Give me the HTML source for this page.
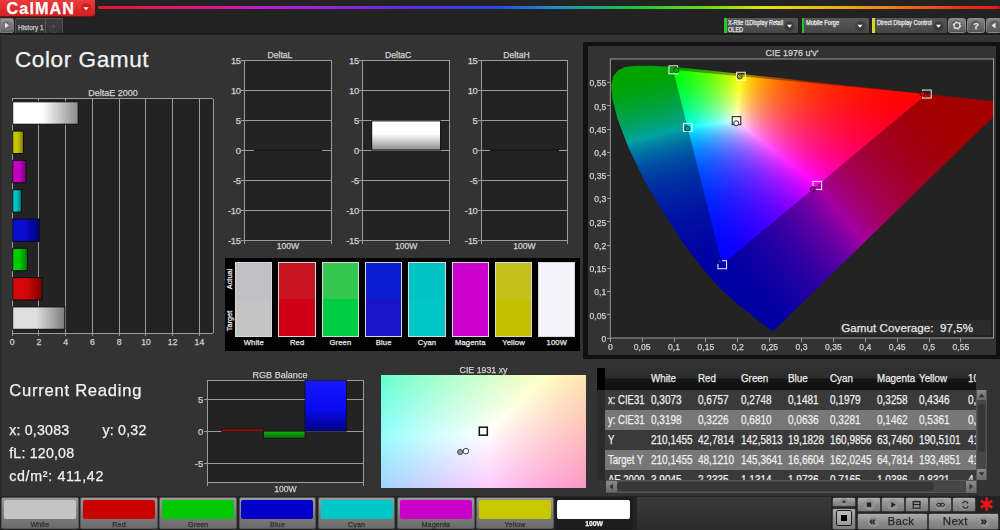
<!DOCTYPE html>
<html><head><meta charset="utf-8">
<style>
*{margin:0;padding:0;box-sizing:border-box}
html,body{width:1000px;height:530px;overflow:hidden;background:#222;font-family:"Liberation Sans", sans-serif;}
.a{position:absolute}
.t{position:absolute;white-space:nowrap;line-height:1;-webkit-text-stroke:0.25px currentColor}
svg{position:absolute;overflow:visible}
line{shape-rendering:crispEdges}
</style></head><body>

<div class="a" style="left:0;top:0;width:1000px;height:17px;background:#222"></div>
<div class="a" style="left:0;top:17px;width:1000px;height:17px;background:#222"></div>
<div class="a" style="left:0;top:0;width:95px;height:16px;background:linear-gradient(#ec3b3b,#d11f22);border-radius:0 0 3px 0;box-shadow:0 1px 0 #7a1010"></div>
<div class="t" style="left:6.6px;top:-0.4px;font-size:16.2px;font-weight:700;color:#fff;letter-spacing:1.05px">CalMAN</div>
<div class="a" style="left:81px;top:3px;width:10px;height:10px;border-radius:50%;background:radial-gradient(circle at 50% 40%,#c81518,#e02a2c)"></div>
<svg style="left:0;top:0" width="100" height="20"><path d="M83.3 7.2 L88.7 7.2 L86 10.2 Z" fill="#fff"/></svg>
<div class="a" style="left:98px;top:5.8px;width:902px;height:3.6px;border-radius:1.8px;background:linear-gradient(90deg,#e0182a 0%,#d8188c 13%,#c419d8 18%,#5a2ee0 35%,#2448e0 44%,#1c8ad0 50%,#20c830 60%,#70dc18 68%,#e6e018 74%,#f0a018 84%,#e83018 96%,#e01818 100%)"></div>
<div class="a" style="left:0;top:18px;width:14px;height:15px;border-radius:0 2px 2px 0;background:linear-gradient(#9a9a9a,#5e5e5e);border:1px solid #777"></div>
<div class="a" style="left:1.5px;top:20.5px;width:10px;height:10px;border-radius:50%;background:radial-gradient(#6a6a6a,#7c7c7c)"></div>
<svg style="left:0;top:0" width="20" height="40"><path d="M5 22.8 L9 25.4 L5 28 Z" fill="#eee"/></svg>
<div class="a" style="left:15px;top:18px;width:48px;height:16px;background:linear-gradient(#3c3c3c,#333);border:1px solid #505050;border-bottom:none;border-radius:2px 2px 0 0"></div>
<div class="a" style="left:45px;top:18px;width:1px;height:16px;background:#555"></div>
<div class="t" style="left:18.2px;top:23.6px;font-size:7.2px;font-weight:400;color:#cccccc;transform:scaleX(0.9);transform-origin:0 0">History 1</div>
<div class="a" style="left:48.5px;top:22px;width:10.5px;height:10.5px;border-radius:50%;background:radial-gradient(#3a3a3a,#353535);border:1px solid #454545"></div>
<div class="t" style="left:51px;top:22.5px;font-size:8px;color:#5a5a5a">+</div>
<div class="a" style="left:724px;top:18px;width:74px;height:16px;background:linear-gradient(#585858,#454545);border-radius:2px"></div>
<div class="a" style="left:724px;top:18px;width:2.5px;height:16px;background:#22cc22"></div>
<div class="t" style="left:728px;top:19.6px;font-size:6.3px;color:#e8e8e8;transform:scaleX(0.88);transform-origin:0 0">X-Rite i1Display Retail</div>
<div class="t" style="left:728px;top:26.6px;font-size:6.3px;color:#e8e8e8;transform:scaleX(0.88);transform-origin:0 0">OLED</div>
<div class="a" style="left:784.0px;top:20.5px;width:11px;height:11px;border-radius:50%;background:radial-gradient(#3a3a3a 40%,#4e4e4e)"></div>
<svg style="left:0;top:0" width="1" height="1"><path d="M786.9 24.8 L792.1 24.8 L789.5 27.8 Z" fill="#fff"/></svg>
<div class="a" style="left:801.5px;top:18px;width:67px;height:16px;background:linear-gradient(#585858,#454545);border-radius:2px"></div>
<div class="a" style="left:801.5px;top:18px;width:2.5px;height:16px;background:#22cc22"></div>
<div class="t" style="left:806.0px;top:19.8px;font-size:6.3px;color:#e8e8e8;transform:scaleX(0.9);transform-origin:0 0">Mobile Forge</div>
<div class="a" style="left:854.5px;top:20.5px;width:11px;height:11px;border-radius:50%;background:radial-gradient(#3a3a3a 40%,#4e4e4e)"></div>
<svg style="left:0;top:0" width="1" height="1"><path d="M857.4 24.8 L862.6 24.8 L860.0 27.8 Z" fill="#fff"/></svg>
<div class="a" style="left:872px;top:18px;width:75px;height:16px;background:linear-gradient(#585858,#454545);border-radius:2px"></div>
<div class="a" style="left:872px;top:18px;width:2.5px;height:16px;background:#d8d820"></div>
<div class="t" style="left:876.5px;top:19.8px;font-size:6.3px;color:#e8e8e8;transform:scaleX(0.9);transform-origin:0 0">Direct Display Control</div>
<div class="a" style="left:933.0px;top:20.5px;width:11px;height:11px;border-radius:50%;background:radial-gradient(#3a3a3a 40%,#4e4e4e)"></div>
<svg style="left:0;top:0" width="1" height="1"><path d="M935.9 24.8 L941.1 24.8 L938.5 27.8 Z" fill="#fff"/></svg>
<div class="a" style="left:948.2px;top:18.2px;width:17.5px;height:14.8px;background:linear-gradient(#858585,#555);border-radius:2.5px;border:1px solid #8a8a8a"></div>
<div class="a" style="left:951.45px;top:20.3px;width:11px;height:11px;border-radius:50%;background:radial-gradient(#5e5e5e 50%,#707070)"></div>
<div class="a" style="left:967.1px;top:18.2px;width:17.5px;height:14.8px;background:linear-gradient(#858585,#555);border-radius:2.5px;border:1px solid #8a8a8a"></div>
<div class="a" style="left:970.35px;top:20.3px;width:11px;height:11px;border-radius:50%;background:radial-gradient(#5e5e5e 50%,#707070)"></div>
<div class="a" style="left:986px;top:18.2px;width:16px;height:14.8px;background:linear-gradient(#858585,#555);border-radius:2.5px;border:1px solid #8a8a8a"></div>
<div class="a" style="left:988.5px;top:20.3px;width:11px;height:11px;border-radius:50%;background:radial-gradient(#5e5e5e 50%,#707070)"></div>
<svg style="left:0;top:0" width="1" height="1"><circle cx="957" cy="25.5" r="2.9" fill="none" stroke="#ddd" stroke-width="1.3"/><circle cx="957" cy="25.5" r="3.6" fill="none" stroke="#ddd" stroke-width="1.4" stroke-dasharray="1.6 2.17"/></svg>
<div class="t" style="left:973.2px;top:21.2px;font-size:9.4px;font-weight:700;color:#e8e8e8">?</div>
<svg style="left:0;top:0" width="1" height="1"><path d="M995.5 22.5 L991.5 25.5 L995.5 28.5 Z" fill="#eee"/></svg>
<div class="a" style="left:0;top:34px;width:1000px;height:462px;background:#333333"></div>
<div class="a" style="left:0;top:32.5px;width:1000px;height:2px;background:#1b1b1b"></div>
<div class="a" style="left:0;top:34.5px;width:1000px;height:1.5px;background:#393939"></div>
<div class="a" style="left:0;top:36px;width:2px;height:460px;background:#2c2c2c"></div>
<div class="t" style="left:15.00px;top:48.87px;font-size:22.6px;font-weight:400;color:#f4f4f4;letter-spacing:0.55px;">Color Gamut</div>
<div class="t" style="left:-87.00px;width:400px;text-align:center;top:88.78px;font-size:9.0px;font-weight:400;color:#d2d2d2;letter-spacing:0px;">DeltaE 2000</div>
<svg style="left:0;top:0" width="1000" height="530"><defs><linearGradient id="bg0" x1="0" x2="1" y1="0" y2="0"><stop offset="0" stop-color="#ffffff"/><stop offset="0.45" stop-color="#ffffff"/><stop offset="1" stop-color="#8a8a8a"/></linearGradient><linearGradient id="bg1" x1="0" x2="1" y1="0" y2="0"><stop offset="0" stop-color="#c8c400"/><stop offset="0.45" stop-color="#c8c400"/><stop offset="1" stop-color="#7e7a00"/></linearGradient><linearGradient id="bg2" x1="0" x2="1" y1="0" y2="0"><stop offset="0" stop-color="#c400c4"/><stop offset="0.45" stop-color="#c400c4"/><stop offset="1" stop-color="#7a007a"/></linearGradient><linearGradient id="bg3" x1="0" x2="1" y1="0" y2="0"><stop offset="0" stop-color="#00c4c4"/><stop offset="0.45" stop-color="#00c4c4"/><stop offset="1" stop-color="#007a7a"/></linearGradient><linearGradient id="bg4" x1="0" x2="1" y1="0" y2="0"><stop offset="0" stop-color="#0c0cd0"/><stop offset="0.45" stop-color="#0c0cd0"/><stop offset="1" stop-color="#000078"/></linearGradient><linearGradient id="bg5" x1="0" x2="1" y1="0" y2="0"><stop offset="0" stop-color="#00cc00"/><stop offset="0.45" stop-color="#00cc00"/><stop offset="1" stop-color="#007800"/></linearGradient><linearGradient id="bg6" x1="0" x2="1" y1="0" y2="0"><stop offset="0" stop-color="#d40808"/><stop offset="0.45" stop-color="#d40808"/><stop offset="1" stop-color="#7e0000"/></linearGradient><linearGradient id="bg7" x1="0" x2="1" y1="0" y2="0"><stop offset="0" stop-color="#dedede"/><stop offset="0.45" stop-color="#dedede"/><stop offset="1" stop-color="#7c7c7c"/></linearGradient></defs><rect x="12.2" y="98.6" width="201.10000000000002" height="234.4" fill="#232323"/><line x1="38.94" y1="98.6" x2="38.94" y2="336.0" stroke="#9c9c9c" stroke-width="1"/><line x1="65.67999999999999" y1="98.6" x2="65.67999999999999" y2="336.0" stroke="#9c9c9c" stroke-width="1"/><line x1="92.42" y1="98.6" x2="92.42" y2="336.0" stroke="#9c9c9c" stroke-width="1"/><line x1="119.16" y1="98.6" x2="119.16" y2="336.0" stroke="#9c9c9c" stroke-width="1"/><line x1="145.89999999999998" y1="98.6" x2="145.89999999999998" y2="336.0" stroke="#9c9c9c" stroke-width="1"/><line x1="172.64" y1="98.6" x2="172.64" y2="336.0" stroke="#9c9c9c" stroke-width="1"/><line x1="199.37999999999997" y1="98.6" x2="199.37999999999997" y2="336.0" stroke="#9c9c9c" stroke-width="1"/><line x1="12.2" y1="98.6" x2="213.3" y2="98.6" stroke="#9c9c9c" stroke-width="1"/><line x1="213.3" y1="98.6" x2="213.3" y2="333.0" stroke="#9c9c9c" stroke-width="1"/><line x1="12.2" y1="98.6" x2="12.2" y2="336.0" stroke="#9c9c9c" stroke-width="1"/><line x1="12.2" y1="333.0" x2="213.3" y2="333.0" stroke="#9c9c9c" stroke-width="1"/><rect x="12.7" y="101.8" width="65.513" height="22.4" fill="url(#bg0)" stroke="#0c0c0c" stroke-width="1"/><rect x="12.7" y="131.1" width="10.696" height="22.4" fill="url(#bg1)" stroke="#0c0c0c" stroke-width="1"/><rect x="12.7" y="160.39999999999998" width="13.37" height="22.4" fill="url(#bg2)" stroke="#0c0c0c" stroke-width="1"/><rect x="12.7" y="189.7" width="8.6905" height="22.4" fill="url(#bg3)" stroke="#0c0c0c" stroke-width="1"/><rect x="12.7" y="219.0" width="26.74" height="22.4" fill="url(#bg4)" stroke="#0c0c0c" stroke-width="1"/><rect x="12.7" y="248.29999999999998" width="14.707" height="22.4" fill="url(#bg5)" stroke="#0c0c0c" stroke-width="1"/><rect x="12.7" y="277.59999999999997" width="29.414" height="22.4" fill="url(#bg6)" stroke="#0c0c0c" stroke-width="1"/><rect x="12.7" y="306.9" width="52.142999999999994" height="22.4" fill="url(#bg7)" stroke="#0c0c0c" stroke-width="1"/></svg>
<div class="t" style="left:-187.80px;width:400px;text-align:center;top:338.22px;font-size:8.6px;font-weight:400;color:#d2d2d2;letter-spacing:0px;">0</div>
<div class="t" style="left:-161.06px;width:400px;text-align:center;top:338.22px;font-size:8.6px;font-weight:400;color:#d2d2d2;letter-spacing:0px;">2</div>
<div class="t" style="left:-134.32px;width:400px;text-align:center;top:338.22px;font-size:8.6px;font-weight:400;color:#d2d2d2;letter-spacing:0px;">4</div>
<div class="t" style="left:-107.58px;width:400px;text-align:center;top:338.22px;font-size:8.6px;font-weight:400;color:#d2d2d2;letter-spacing:0px;">6</div>
<div class="t" style="left:-80.84px;width:400px;text-align:center;top:338.22px;font-size:8.6px;font-weight:400;color:#d2d2d2;letter-spacing:0px;">8</div>
<div class="t" style="left:-54.10px;width:400px;text-align:center;top:338.22px;font-size:8.6px;font-weight:400;color:#d2d2d2;letter-spacing:0px;">10</div>
<div class="t" style="left:-27.36px;width:400px;text-align:center;top:338.22px;font-size:8.6px;font-weight:400;color:#d2d2d2;letter-spacing:0px;">12</div>
<div class="t" style="left:-0.62px;width:400px;text-align:center;top:338.22px;font-size:8.6px;font-weight:400;color:#d2d2d2;letter-spacing:0px;">14</div>
<svg style="left:0;top:0" width="1000" height="530"><rect x="244.5" y="60" width="86.89999999999998" height="180" fill="#232323"/><line x1="241.0" y1="90" x2="331.4" y2="90" stroke="#9c9c9c" stroke-width="1"/><line x1="241.0" y1="120" x2="331.4" y2="120" stroke="#9c9c9c" stroke-width="1"/><line x1="241.0" y1="150" x2="331.4" y2="150" stroke="#9c9c9c" stroke-width="1"/><line x1="241.0" y1="180" x2="331.4" y2="180" stroke="#9c9c9c" stroke-width="1"/><line x1="241.0" y1="210" x2="331.4" y2="210" stroke="#9c9c9c" stroke-width="1"/><line x1="241.0" y1="60" x2="331.4" y2="60" stroke="#9c9c9c" stroke-width="1"/><line x1="241.0" y1="240" x2="331.4" y2="240" stroke="#9c9c9c" stroke-width="1"/><line x1="244.5" y1="60" x2="244.5" y2="243.5" stroke="#9c9c9c" stroke-width="1"/><line x1="331.4" y1="60" x2="331.4" y2="243.5" stroke="#9c9c9c" stroke-width="1"/><line x1="253.5" y1="150" x2="322.4" y2="150" stroke="#1a1a1a" stroke-width="1.2"/></svg>
<div class="t" style="left:-159.30px;width:400px;text-align:right;top:55.64px;font-size:9.4px;font-weight:400;color:#d2d2d2;letter-spacing:-0.3px;">15</div>
<div class="t" style="left:-159.30px;width:400px;text-align:right;top:85.64px;font-size:9.4px;font-weight:400;color:#d2d2d2;letter-spacing:-0.3px;">10</div>
<div class="t" style="left:-159.30px;width:400px;text-align:right;top:115.64px;font-size:9.4px;font-weight:400;color:#d2d2d2;letter-spacing:-0.3px;">5</div>
<div class="t" style="left:-159.30px;width:400px;text-align:right;top:145.64px;font-size:9.4px;font-weight:400;color:#d2d2d2;letter-spacing:-0.3px;">0</div>
<div class="t" style="left:-159.30px;width:400px;text-align:right;top:175.64px;font-size:9.4px;font-weight:400;color:#d2d2d2;letter-spacing:-0.3px;">-5</div>
<div class="t" style="left:-159.30px;width:400px;text-align:right;top:205.64px;font-size:9.4px;font-weight:400;color:#d2d2d2;letter-spacing:-0.3px;">-10</div>
<div class="t" style="left:-159.30px;width:400px;text-align:right;top:235.64px;font-size:9.4px;font-weight:400;color:#d2d2d2;letter-spacing:-0.3px;">-15</div>
<div class="t" style="left:79.95px;width:400px;text-align:center;top:50.52px;font-size:8.6px;font-weight:400;color:#d2d2d2;letter-spacing:0px;">DeltaL</div>
<div class="t" style="left:87.95px;width:400px;text-align:center;top:241.72px;font-size:8.6px;font-weight:400;color:#d2d2d2;letter-spacing:0px;">100W</div>
<svg style="left:0;top:0" width="1000" height="530"><rect x="362.7" y="60" width="86.90000000000003" height="180" fill="#232323"/><line x1="359.2" y1="90" x2="449.6" y2="90" stroke="#9c9c9c" stroke-width="1"/><line x1="359.2" y1="120" x2="449.6" y2="120" stroke="#9c9c9c" stroke-width="1"/><line x1="359.2" y1="150" x2="449.6" y2="150" stroke="#9c9c9c" stroke-width="1"/><line x1="359.2" y1="180" x2="449.6" y2="180" stroke="#9c9c9c" stroke-width="1"/><line x1="359.2" y1="210" x2="449.6" y2="210" stroke="#9c9c9c" stroke-width="1"/><line x1="359.2" y1="60" x2="449.6" y2="60" stroke="#9c9c9c" stroke-width="1"/><line x1="359.2" y1="240" x2="449.6" y2="240" stroke="#9c9c9c" stroke-width="1"/><line x1="362.7" y1="60" x2="362.7" y2="243.5" stroke="#9c9c9c" stroke-width="1"/><line x1="449.6" y1="60" x2="449.6" y2="243.5" stroke="#9c9c9c" stroke-width="1"/><defs><linearGradient id="dc362" x1="0" x2="0" y1="0" y2="1"><stop offset="0" stop-color="#fff"/><stop offset="0.45" stop-color="#fff"/><stop offset="1" stop-color="#8c8c8c"/></linearGradient></defs><rect x="371.7" y="120.9" width="68.90000000000003" height="29.099999999999998" fill="url(#dc362)" stroke="#0c0c0c" stroke-width="1"/></svg>
<div class="t" style="left:-41.10px;width:400px;text-align:right;top:55.64px;font-size:9.4px;font-weight:400;color:#d2d2d2;letter-spacing:-0.3px;">15</div>
<div class="t" style="left:-41.10px;width:400px;text-align:right;top:85.64px;font-size:9.4px;font-weight:400;color:#d2d2d2;letter-spacing:-0.3px;">10</div>
<div class="t" style="left:-41.10px;width:400px;text-align:right;top:115.64px;font-size:9.4px;font-weight:400;color:#d2d2d2;letter-spacing:-0.3px;">5</div>
<div class="t" style="left:-41.10px;width:400px;text-align:right;top:145.64px;font-size:9.4px;font-weight:400;color:#d2d2d2;letter-spacing:-0.3px;">0</div>
<div class="t" style="left:-41.10px;width:400px;text-align:right;top:175.64px;font-size:9.4px;font-weight:400;color:#d2d2d2;letter-spacing:-0.3px;">-5</div>
<div class="t" style="left:-41.10px;width:400px;text-align:right;top:205.64px;font-size:9.4px;font-weight:400;color:#d2d2d2;letter-spacing:-0.3px;">-10</div>
<div class="t" style="left:-41.10px;width:400px;text-align:right;top:235.64px;font-size:9.4px;font-weight:400;color:#d2d2d2;letter-spacing:-0.3px;">-15</div>
<div class="t" style="left:198.15px;width:400px;text-align:center;top:50.52px;font-size:8.6px;font-weight:400;color:#d2d2d2;letter-spacing:0px;">DeltaC</div>
<div class="t" style="left:206.15px;width:400px;text-align:center;top:241.72px;font-size:8.6px;font-weight:400;color:#d2d2d2;letter-spacing:0px;">100W</div>
<svg style="left:0;top:0" width="1000" height="530"><rect x="481.3" y="60" width="86.40000000000003" height="180" fill="#232323"/><line x1="477.8" y1="90" x2="567.7" y2="90" stroke="#9c9c9c" stroke-width="1"/><line x1="477.8" y1="120" x2="567.7" y2="120" stroke="#9c9c9c" stroke-width="1"/><line x1="477.8" y1="150" x2="567.7" y2="150" stroke="#9c9c9c" stroke-width="1"/><line x1="477.8" y1="180" x2="567.7" y2="180" stroke="#9c9c9c" stroke-width="1"/><line x1="477.8" y1="210" x2="567.7" y2="210" stroke="#9c9c9c" stroke-width="1"/><line x1="477.8" y1="60" x2="567.7" y2="60" stroke="#9c9c9c" stroke-width="1"/><line x1="477.8" y1="240" x2="567.7" y2="240" stroke="#9c9c9c" stroke-width="1"/><line x1="481.3" y1="60" x2="481.3" y2="243.5" stroke="#9c9c9c" stroke-width="1"/><line x1="567.7" y1="60" x2="567.7" y2="243.5" stroke="#9c9c9c" stroke-width="1"/><line x1="490.3" y1="150" x2="558.7" y2="150" stroke="#1a1a1a" stroke-width="1.2"/></svg>
<div class="t" style="left:77.50px;width:400px;text-align:right;top:55.64px;font-size:9.4px;font-weight:400;color:#d2d2d2;letter-spacing:-0.3px;">15</div>
<div class="t" style="left:77.50px;width:400px;text-align:right;top:85.64px;font-size:9.4px;font-weight:400;color:#d2d2d2;letter-spacing:-0.3px;">10</div>
<div class="t" style="left:77.50px;width:400px;text-align:right;top:115.64px;font-size:9.4px;font-weight:400;color:#d2d2d2;letter-spacing:-0.3px;">5</div>
<div class="t" style="left:77.50px;width:400px;text-align:right;top:145.64px;font-size:9.4px;font-weight:400;color:#d2d2d2;letter-spacing:-0.3px;">0</div>
<div class="t" style="left:77.50px;width:400px;text-align:right;top:175.64px;font-size:9.4px;font-weight:400;color:#d2d2d2;letter-spacing:-0.3px;">-5</div>
<div class="t" style="left:77.50px;width:400px;text-align:right;top:205.64px;font-size:9.4px;font-weight:400;color:#d2d2d2;letter-spacing:-0.3px;">-10</div>
<div class="t" style="left:77.50px;width:400px;text-align:right;top:235.64px;font-size:9.4px;font-weight:400;color:#d2d2d2;letter-spacing:-0.3px;">-15</div>
<div class="t" style="left:316.50px;width:400px;text-align:center;top:50.52px;font-size:8.6px;font-weight:400;color:#d2d2d2;letter-spacing:0px;">DeltaH</div>
<div class="t" style="left:324.50px;width:400px;text-align:center;top:241.72px;font-size:8.6px;font-weight:400;color:#d2d2d2;letter-spacing:0px;">100W</div>
<div class="a" style="left:225px;top:258px;width:355px;height:92.5px;background:#000"></div>
<div class="a" style="left:235.20px;top:262px;width:37.3px;height:75.3px;border:1px solid #d8d8d8;background:linear-gradient(#c0c0c4 0,#c0c0c4 50%,#c4c4c4 50%,#c4c4c4 100%)"></div>
<div class="t" style="left:53.85px;width:400px;text-align:center;top:339.17px;font-size:7.6px;font-weight:400;color:#eaeaea;letter-spacing:0.15px;">White</div>
<div class="a" style="left:278.48px;top:262px;width:37.3px;height:75.3px;border:1px solid #d8d8d8;background:linear-gradient(#c8141e 0,#c8141e 50%,#d0001a 50%,#d0001a 100%)"></div>
<div class="t" style="left:97.13px;width:400px;text-align:center;top:339.17px;font-size:7.6px;font-weight:400;color:#eaeaea;letter-spacing:0.15px;">Red</div>
<div class="a" style="left:321.76px;top:262px;width:37.3px;height:75.3px;border:1px solid #d8d8d8;background:linear-gradient(#34c850 0,#34c850 50%,#00cc44 50%,#00cc44 100%)"></div>
<div class="t" style="left:140.41px;width:400px;text-align:center;top:339.17px;font-size:7.6px;font-weight:400;color:#eaeaea;letter-spacing:0.15px;">Green</div>
<div class="a" style="left:365.04px;top:262px;width:37.3px;height:75.3px;border:1px solid #d8d8d8;background:linear-gradient(#0a1ed0 0,#0a1ed0 50%,#1a14c8 50%,#1a14c8 100%)"></div>
<div class="t" style="left:183.69px;width:400px;text-align:center;top:339.17px;font-size:7.6px;font-weight:400;color:#eaeaea;letter-spacing:0.15px;">Blue</div>
<div class="a" style="left:408.32px;top:262px;width:37.3px;height:75.3px;border:1px solid #d8d8d8;background:linear-gradient(#00c4c4 0,#00c4c4 50%,#00c6c6 50%,#00c6c6 100%)"></div>
<div class="t" style="left:226.97px;width:400px;text-align:center;top:339.17px;font-size:7.6px;font-weight:400;color:#eaeaea;letter-spacing:0.15px;">Cyan</div>
<div class="a" style="left:451.60px;top:262px;width:37.3px;height:75.3px;border:1px solid #d8d8d8;background:linear-gradient(#cc00cc 0,#cc00cc 50%,#cc00cc 50%,#cc00cc 100%)"></div>
<div class="t" style="left:270.25px;width:400px;text-align:center;top:339.17px;font-size:7.6px;font-weight:400;color:#eaeaea;letter-spacing:0.15px;">Magenta</div>
<div class="a" style="left:494.88px;top:262px;width:37.3px;height:75.3px;border:1px solid #d8d8d8;background:linear-gradient(#c4c01c 0,#c4c01c 50%,#c4c000 50%,#c4c000 100%)"></div>
<div class="t" style="left:313.53px;width:400px;text-align:center;top:339.17px;font-size:7.6px;font-weight:400;color:#eaeaea;letter-spacing:0.15px;">Yellow</div>
<div class="a" style="left:538.16px;top:262px;width:37.3px;height:75.3px;border:1px solid #d8d8d8;background:linear-gradient(#f4f4fa 0,#f4f4fa 50%,#f4f4fa 50%,#f4f4fa 100%)"></div>
<div class="t" style="left:356.81px;width:400px;text-align:center;top:339.17px;font-size:7.6px;font-weight:400;color:#eaeaea;letter-spacing:0.15px;">100W</div>
<div class="t" style="left:230px;top:279px;font-size:7.4px;font-weight:400;color:#e8e8e8;transform:translate(-50%,-50%) rotate(-90deg)">Actual</div>
<div class="t" style="left:230px;top:321px;font-size:7.4px;font-weight:400;color:#e8e8e8;transform:translate(-50%,-50%) rotate(-90deg)">Target</div>
<div class="a" style="left:583px;top:42px;width:417px;height:316.7px;background:#111"></div>
<div class="a" style="left:587.5px;top:46px;width:408px;height:308.7px;background:#333"></div>
<div class="t" style="left:592.00px;width:400px;text-align:center;top:48.98px;font-size:9.0px;font-weight:400;color:#d2d2d2;letter-spacing:0px;">CIE 1976 u'v'</div>
<div class="a" style="left:610.3px;top:59px;width:383.2px;height:279px;background:#232323"></div>
<svg id="ciefb" style="left:610px;top:59px" width="384" height="279"><defs><linearGradient id="fbo" gradientUnits="userSpaceOnUse" x1="0" y1="0" x2="0" y2="279"><stop offset="0" stop-color="#009a00"/><stop offset="0.35" stop-color="#008a40"/><stop offset="0.5" stop-color="#008080"/><stop offset="0.75" stop-color="#0020a0"/><stop offset="1" stop-color="#0000a0"/></linearGradient><linearGradient id="fbr" gradientUnits="userSpaceOnUse" x1="330" y1="60" x2="230" y2="180"><stop offset="0" stop-color="#a00000"/><stop offset="0.5" stop-color="#900090"/><stop offset="1" stop-color="#1a00a0"/></linearGradient><radialGradient id="fbw" gradientUnits="userSpaceOnUse" cx="126.4" cy="61.6" r="60"><stop offset="0" stop-color="#fff"/><stop offset="0.3" stop-color="#fff" stop-opacity="0.7"/><stop offset="1" stop-color="#fff" stop-opacity="0"/></radialGradient><linearGradient id="fbt" gradientUnits="userSpaceOnUse" x1="70" y1="15" x2="320" y2="40"><stop offset="0" stop-color="#00ff20"/><stop offset="0.25" stop-color="#e0ff00"/><stop offset="0.5" stop-color="#ff8000"/><stop offset="1" stop-color="#ff0010"/></linearGradient><linearGradient id="fbb" gradientUnits="userSpaceOnUse" x1="100" y1="60" x2="150" y2="250"><stop offset="0" stop-color="#00ffff" stop-opacity="0"/><stop offset="0.3" stop-color="#00e0ff"/><stop offset="0.7" stop-color="#2040ff"/><stop offset="1" stop-color="#0000ff"/></linearGradient></defs><polygon points="164.0,271.3 163.8,271.4 163.3,271.6 162.6,271.6 161.1,271.2 159.5,270.1 157.2,268.5 154.0,266.0 149.9,262.7 144.8,258.7 138.1,253.5 129.9,247.1 120.0,238.6 108.0,227.0 92.2,208.9 73.4,184.1 53.1,153.3 33.5,119.9 18.3,87.9 7.9,60.9 2.5,40.8 1.2,26.9 3.3,17.3 8.1,11.2 15.0,8.1 23.3,6.9 32.2,6.6 41.3,6.7 50.8,7.2 61.0,7.9 72.2,8.8 84.4,10.0 97.9,11.3 112.9,12.9 129.5,14.7 147.7,16.7 167.6,18.8 189.0,21.2 211.7,23.6 235.0,26.2 257.6,28.6 279.5,31.0 299.4,33.2 317.0,35.1 332.0,36.7 344.6,38.1 355.1,39.2 364.3,40.2 372.0,41.1 383.2,42.3 389.8,43.0 397.8,43.9" fill="url(#fbo)"/><polygon points="112.1,205.7 316.8,35.1 167.6,18.8 189.0,21.2 211.7,23.6 235.0,26.2 257.6,28.6 279.5,31.0 299.4,33.2 317.0,35.1 332.0,36.7 344.6,38.1 355.1,39.2 364.3,40.2 372.0,41.1 383.2,42.3 389.8,43.0 397.8,43.9 164.0,271.3 163.8,271.4 163.3,271.6 162.6,271.6 161.1,271.2 159.5,270.1 157.2,268.5 154.0,266.0 149.9,262.7 144.8,258.7 138.1,253.5 129.9,247.1 120.0,238.6" fill="url(#fbr)"/><polygon points="316.8,35.1 63.2,10.8 112.1,205.7" fill="url(#fbt)"/><polygon points="316.8,35.1 63.2,10.8 112.1,205.7" fill="url(#fbb)" opacity="0.9"/><polygon points="316.8,35.1 63.2,10.8 112.1,205.7" fill="url(#fbw)"/></svg>
<canvas id="cie" class="a" width="384" height="279" style="left:610px;top:59px;width:384px;height:279px"></canvas>
<svg style="left:0;top:0" width="1000" height="530"><rect x="610.3" y="59" width="383.2" height="279" fill="none" stroke="#9a9a9a" stroke-width="1"/><line x1="606.5" y1="338.00" x2="610.3" y2="338.00" stroke="#9a9a9a" stroke-width="1"/><line x1="610.30" y1="338" x2="610.30" y2="341.5" stroke="#9a9a9a" stroke-width="1"/><line x1="606.5" y1="314.79" x2="610.3" y2="314.79" stroke="#9a9a9a" stroke-width="1"/><line x1="642.18" y1="338" x2="642.18" y2="341.5" stroke="#9a9a9a" stroke-width="1"/><line x1="606.5" y1="291.58" x2="610.3" y2="291.58" stroke="#9a9a9a" stroke-width="1"/><line x1="674.06" y1="338" x2="674.06" y2="341.5" stroke="#9a9a9a" stroke-width="1"/><line x1="606.5" y1="268.37" x2="610.3" y2="268.37" stroke="#9a9a9a" stroke-width="1"/><line x1="705.94" y1="338" x2="705.94" y2="341.5" stroke="#9a9a9a" stroke-width="1"/><line x1="606.5" y1="245.16" x2="610.3" y2="245.16" stroke="#9a9a9a" stroke-width="1"/><line x1="737.82" y1="338" x2="737.82" y2="341.5" stroke="#9a9a9a" stroke-width="1"/><line x1="606.5" y1="221.95" x2="610.3" y2="221.95" stroke="#9a9a9a" stroke-width="1"/><line x1="769.70" y1="338" x2="769.70" y2="341.5" stroke="#9a9a9a" stroke-width="1"/><line x1="606.5" y1="198.74" x2="610.3" y2="198.74" stroke="#9a9a9a" stroke-width="1"/><line x1="801.58" y1="338" x2="801.58" y2="341.5" stroke="#9a9a9a" stroke-width="1"/><line x1="606.5" y1="175.53" x2="610.3" y2="175.53" stroke="#9a9a9a" stroke-width="1"/><line x1="833.46" y1="338" x2="833.46" y2="341.5" stroke="#9a9a9a" stroke-width="1"/><line x1="606.5" y1="152.32" x2="610.3" y2="152.32" stroke="#9a9a9a" stroke-width="1"/><line x1="865.34" y1="338" x2="865.34" y2="341.5" stroke="#9a9a9a" stroke-width="1"/><line x1="606.5" y1="129.11" x2="610.3" y2="129.11" stroke="#9a9a9a" stroke-width="1"/><line x1="897.22" y1="338" x2="897.22" y2="341.5" stroke="#9a9a9a" stroke-width="1"/><line x1="606.5" y1="105.90" x2="610.3" y2="105.90" stroke="#9a9a9a" stroke-width="1"/><line x1="929.10" y1="338" x2="929.10" y2="341.5" stroke="#9a9a9a" stroke-width="1"/><line x1="606.5" y1="82.69" x2="610.3" y2="82.69" stroke="#9a9a9a" stroke-width="1"/><line x1="960.98" y1="338" x2="960.98" y2="341.5" stroke="#9a9a9a" stroke-width="1"/></svg>
<div class="t" style="left:206.30px;width:400px;text-align:right;top:334.72px;font-size:8.6px;font-weight:400;color:#d2d2d2;letter-spacing:0px;">0</div>
<div class="t" style="left:410.30px;width:400px;text-align:center;top:343.22px;font-size:8.6px;font-weight:400;color:#d2d2d2;letter-spacing:0px;">0</div>
<div class="t" style="left:206.30px;width:400px;text-align:right;top:311.51px;font-size:8.6px;font-weight:400;color:#d2d2d2;letter-spacing:0px;">0,05</div>
<div class="t" style="left:442.18px;width:400px;text-align:center;top:343.22px;font-size:8.6px;font-weight:400;color:#d2d2d2;letter-spacing:0px;">0,05</div>
<div class="t" style="left:206.30px;width:400px;text-align:right;top:288.30px;font-size:8.6px;font-weight:400;color:#d2d2d2;letter-spacing:0px;">0,1</div>
<div class="t" style="left:474.06px;width:400px;text-align:center;top:343.22px;font-size:8.6px;font-weight:400;color:#d2d2d2;letter-spacing:0px;">0,1</div>
<div class="t" style="left:206.30px;width:400px;text-align:right;top:265.09px;font-size:8.6px;font-weight:400;color:#d2d2d2;letter-spacing:0px;">0,15</div>
<div class="t" style="left:505.94px;width:400px;text-align:center;top:343.22px;font-size:8.6px;font-weight:400;color:#d2d2d2;letter-spacing:0px;">0,15</div>
<div class="t" style="left:206.30px;width:400px;text-align:right;top:241.88px;font-size:8.6px;font-weight:400;color:#d2d2d2;letter-spacing:0px;">0,2</div>
<div class="t" style="left:537.82px;width:400px;text-align:center;top:343.22px;font-size:8.6px;font-weight:400;color:#d2d2d2;letter-spacing:0px;">0,2</div>
<div class="t" style="left:206.30px;width:400px;text-align:right;top:218.67px;font-size:8.6px;font-weight:400;color:#d2d2d2;letter-spacing:0px;">0,25</div>
<div class="t" style="left:569.70px;width:400px;text-align:center;top:343.22px;font-size:8.6px;font-weight:400;color:#d2d2d2;letter-spacing:0px;">0,25</div>
<div class="t" style="left:206.30px;width:400px;text-align:right;top:195.46px;font-size:8.6px;font-weight:400;color:#d2d2d2;letter-spacing:0px;">0,3</div>
<div class="t" style="left:601.58px;width:400px;text-align:center;top:343.22px;font-size:8.6px;font-weight:400;color:#d2d2d2;letter-spacing:0px;">0,3</div>
<div class="t" style="left:206.30px;width:400px;text-align:right;top:172.25px;font-size:8.6px;font-weight:400;color:#d2d2d2;letter-spacing:0px;">0,35</div>
<div class="t" style="left:633.46px;width:400px;text-align:center;top:343.22px;font-size:8.6px;font-weight:400;color:#d2d2d2;letter-spacing:0px;">0,35</div>
<div class="t" style="left:206.30px;width:400px;text-align:right;top:149.04px;font-size:8.6px;font-weight:400;color:#d2d2d2;letter-spacing:0px;">0,4</div>
<div class="t" style="left:665.34px;width:400px;text-align:center;top:343.22px;font-size:8.6px;font-weight:400;color:#d2d2d2;letter-spacing:0px;">0,4</div>
<div class="t" style="left:206.30px;width:400px;text-align:right;top:125.83px;font-size:8.6px;font-weight:400;color:#d2d2d2;letter-spacing:0px;">0,45</div>
<div class="t" style="left:697.22px;width:400px;text-align:center;top:343.22px;font-size:8.6px;font-weight:400;color:#d2d2d2;letter-spacing:0px;">0,45</div>
<div class="t" style="left:206.30px;width:400px;text-align:right;top:102.62px;font-size:8.6px;font-weight:400;color:#d2d2d2;letter-spacing:0px;">0,5</div>
<div class="t" style="left:729.10px;width:400px;text-align:center;top:343.22px;font-size:8.6px;font-weight:400;color:#d2d2d2;letter-spacing:0px;">0,5</div>
<div class="t" style="left:206.30px;width:400px;text-align:right;top:79.41px;font-size:8.6px;font-weight:400;color:#d2d2d2;letter-spacing:0px;">0,55</div>
<div class="t" style="left:760.98px;width:400px;text-align:center;top:343.22px;font-size:8.6px;font-weight:400;color:#d2d2d2;letter-spacing:0px;">0,55</div>
<div class="a" style="left:840.4px;top:320.1px;width:151px;height:15.2px;background:#2b2b2b"></div>
<div class="t" style="left:841.30px;top:322.08px;font-size:11.6px;font-weight:400;color:#e6e6e6;letter-spacing:0.05px;">Gamut Coverage:&nbsp; 97,5%</div>
<svg style="left:0;top:0" width="1000" height="530"><rect x="922.60" y="90.06" width="8.6" height="8" fill="none" stroke="#fff" stroke-opacity="0.9" stroke-width="1.05"/><rect x="668.97" y="65.83" width="8.6" height="8" fill="none" stroke="#fff" stroke-opacity="0.9" stroke-width="1.05"/><rect x="717.94" y="260.70" width="8.6" height="8" fill="none" stroke="#fff" stroke-opacity="0.9" stroke-width="1.05"/><rect x="683.44" y="123.39" width="8.6" height="8" fill="none" stroke="#fff" stroke-opacity="0.9" stroke-width="1.05"/><rect x="813.00" y="181.42" width="8.6" height="8" fill="none" stroke="#fff" stroke-opacity="0.9" stroke-width="1.05"/><rect x="736.62" y="72.28" width="8.6" height="8" fill="none" stroke="#fff" stroke-opacity="0.9" stroke-width="1.05"/><rect x="732.22" y="116.62" width="8.6" height="8" fill="none" stroke="#0a0a0a" stroke-opacity="0.9" stroke-width="1.05"/><circle cx="922.53" cy="93.83" r="2.5" fill="#d00000" stroke="#500000" stroke-width="1"/><circle cx="676.29" cy="70.16" r="2.5" fill="#00b000" stroke="#004000" stroke-width="1"/><circle cx="719.27" cy="261.36" r="2.5" fill="#1010d0" stroke="#000050" stroke-width="1"/><circle cx="687.45" cy="128.46" r="2.5" fill="#00a0a0" stroke="#003838" stroke-width="1"/><circle cx="812.80" cy="189.13" r="2.5" fill="#a000a0" stroke="#3a003a" stroke-width="1"/><circle cx="739.73" cy="76.47" r="2.5" fill="#a0a000" stroke="#383800" stroke-width="1"/><circle cx="736.23" cy="123.31" r="2.5" fill="#ffffff" stroke="#222" stroke-width="1"/></svg>
<div class="t" style="left:9.20px;top:382.85px;font-size:16.6px;font-weight:400;color:#f2f2f2;letter-spacing:0.75px;">Current Reading</div>
<div class="t" style="left:9.20px;top:423.28px;font-size:14.2px;font-weight:400;color:#f0f0f0;letter-spacing:0.2px;">x: 0,3083</div>
<div class="t" style="left:102.50px;top:423.28px;font-size:14.2px;font-weight:400;color:#f0f0f0;letter-spacing:0.2px;">y: 0,32</div>
<div class="t" style="left:9.20px;top:445.78px;font-size:14.2px;font-weight:400;color:#f0f0f0;letter-spacing:0.2px;">fL: 120,08</div>
<div class="t" style="left:9.20px;top:468.98px;font-size:14.2px;font-weight:400;color:#f0f0f0;letter-spacing:0.7px;">cd/m&sup2;: 411,42</div>
<div class="t" style="left:80.00px;width:400px;text-align:center;top:370.70px;font-size:9.1px;font-weight:400;color:#d2d2d2;letter-spacing:0px;">RGB Balance</div>
<svg style="left:0;top:0" width="1000" height="530"><rect x="207.2" y="380.3" width="156.40000000000003" height="101.80000000000001" fill="#232323"/><line x1="203.7" y1="399.39" x2="363.6" y2="399.39" stroke="#9c9c9c" stroke-width="1"/><line x1="203.7" y1="431.20" x2="363.6" y2="431.20" stroke="#9c9c9c" stroke-width="1"/><line x1="203.7" y1="463.01" x2="363.6" y2="463.01" stroke="#9c9c9c" stroke-width="1"/><line x1="207.2" y1="380.3" x2="363.6" y2="380.3" stroke="#9c9c9c" stroke-width="1"/><line x1="207.2" y1="482.1" x2="363.6" y2="482.1" stroke="#9c9c9c" stroke-width="1"/><line x1="207.2" y1="380.3" x2="207.2" y2="485.6" stroke="#9c9c9c" stroke-width="1"/><line x1="363.6" y1="380.3" x2="363.6" y2="485.6" stroke="#9c9c9c" stroke-width="1"/><defs><linearGradient id="gb" x1="0" x2="0" y1="0" y2="1"><stop offset="0" stop-color="#1818ff"/><stop offset="0.55" stop-color="#0a0af0"/><stop offset="1" stop-color="#00008a"/></linearGradient><linearGradient id="gg" x1="0" x2="0" y1="0" y2="1"><stop offset="0" stop-color="#10b010"/><stop offset="1" stop-color="#007000"/></linearGradient><linearGradient id="gr" x1="0" x2="0" y1="0" y2="1"><stop offset="0" stop-color="#d01010"/><stop offset="1" stop-color="#800000"/></linearGradient></defs><rect x="221.7" y="429.0" width="41.8" height="2.4" fill="url(#gr)" stroke="#111" stroke-width="0.8"/><rect x="263.5" y="431.2" width="41.5" height="7.0" fill="url(#gg)" stroke="#111" stroke-width="0.8"/><rect x="305" y="380.3" width="41.4" height="50.90" fill="url(#gb)" stroke="#111" stroke-width="0.8"/></svg>
<div class="t" style="left:-196.80px;width:400px;text-align:right;top:395.03px;font-size:9.4px;font-weight:400;color:#d2d2d2;letter-spacing:0px;">5</div>
<div class="t" style="left:-196.80px;width:400px;text-align:right;top:426.84px;font-size:9.4px;font-weight:400;color:#d2d2d2;letter-spacing:0px;">0</div>
<div class="t" style="left:-196.80px;width:400px;text-align:right;top:458.66px;font-size:9.4px;font-weight:400;color:#d2d2d2;letter-spacing:0px;">-5</div>
<div class="t" style="left:85.40px;width:400px;text-align:center;top:484.72px;font-size:8.6px;font-weight:400;color:#d2d2d2;letter-spacing:0px;">100W</div>
<div class="t" style="left:283.50px;width:400px;text-align:center;top:365.85px;font-size:8.8px;font-weight:400;color:#d2d2d2;letter-spacing:0px;">CIE 1931 xy</div>
<div class="a" style="left:381px;top:375px;width:205px;height:113px;background:linear-gradient(rgba(150,255,170,0.55),rgba(255,255,255,0) 45%,rgba(255,160,240,0) 55%,rgba(255,150,230,0.55)),linear-gradient(90deg,#a0f8f0,#fff 50%,#ffb0c0)"></div>
<canvas id="xy" class="a" width="205" height="113" style="left:381px;top:375px;width:205px;height:113px"></canvas>
<svg style="left:0;top:0" width="1000" height="530"><rect x="479.3" y="427.2" width="8" height="8" fill="none" stroke="#111" stroke-width="1.5"/><circle cx="460.2" cy="452" r="2.6" fill="#9a9a9a" stroke="#333" stroke-width="0.9"/><circle cx="465.9" cy="451.1" r="2.8" fill="#fff" stroke="#333" stroke-width="0.9"/></svg>
<div class="a" style="left:597px;top:367.5px;width:379px;height:112.5px;overflow:hidden">
<div class="a" style="left:0;top:0;width:379px;height:22.2px;background:linear-gradient(#303030 0,#2c2c2c 45%,#151515 50%,#111 100%)"></div>
<div class="a" style="left:0;top:0;width:8px;height:22.2px;background:#000"></div>
<div class="t" style="left:54.30px;top:5.45px;font-size:11.4px;font-weight:400;color:#f0f0f0;letter-spacing:0px;transform:scaleX(0.86);transform-origin:0 0;">White</div>
<div class="t" style="left:101.30px;top:5.45px;font-size:11.4px;font-weight:400;color:#f0f0f0;letter-spacing:0px;transform:scaleX(0.86);transform-origin:0 0;">Red</div>
<div class="t" style="left:143.60px;top:5.45px;font-size:11.4px;font-weight:400;color:#f0f0f0;letter-spacing:0px;transform:scaleX(0.86);transform-origin:0 0;">Green</div>
<div class="t" style="left:191.10px;top:5.45px;font-size:11.4px;font-weight:400;color:#f0f0f0;letter-spacing:0px;transform:scaleX(0.86);transform-origin:0 0;">Blue</div>
<div class="t" style="left:232.60px;top:5.45px;font-size:11.4px;font-weight:400;color:#f0f0f0;letter-spacing:0px;transform:scaleX(0.86);transform-origin:0 0;">Cyan</div>
<div class="t" style="left:280.20px;top:5.45px;font-size:11.4px;font-weight:400;color:#f0f0f0;letter-spacing:0px;transform:scaleX(0.86);transform-origin:0 0;">Magenta</div>
<div class="t" style="left:322.40px;top:5.45px;font-size:11.4px;font-weight:400;color:#f0f0f0;letter-spacing:0px;transform:scaleX(0.86);transform-origin:0 0;">Yellow</div>
<div class="t" style="left:370.50px;top:5.45px;font-size:11.4px;font-weight:400;color:#f0f0f0;letter-spacing:0px;transform:scaleX(0.86);transform-origin:0 0;">100W</div>
<div class="a" style="left:0;top:22.20px;width:379px;height:20.05px;background:#3a3a3a"></div>
<div class="a" style="left:0;top:22.20px;width:8px;height:20.05px;background:#2a2a2a"></div>
<div class="t" style="left:10.50px;top:26.47px;font-size:12.2px;font-weight:400;color:#f0f0f0;letter-spacing:0px;transform:scaleX(0.78);transform-origin:0 0;">x: CIE31</div>
<div class="t" style="left:54.30px;top:26.47px;font-size:12.2px;font-weight:400;color:#f0f0f0;letter-spacing:0px;transform:scaleX(0.82);transform-origin:0 0;">0,3073</div>
<div class="t" style="left:101.30px;top:26.47px;font-size:12.2px;font-weight:400;color:#f0f0f0;letter-spacing:0px;transform:scaleX(0.82);transform-origin:0 0;">0,6757</div>
<div class="t" style="left:143.60px;top:26.47px;font-size:12.2px;font-weight:400;color:#f0f0f0;letter-spacing:0px;transform:scaleX(0.82);transform-origin:0 0;">0,2748</div>
<div class="t" style="left:191.10px;top:26.47px;font-size:12.2px;font-weight:400;color:#f0f0f0;letter-spacing:0px;transform:scaleX(0.82);transform-origin:0 0;">0,1481</div>
<div class="t" style="left:232.60px;top:26.47px;font-size:12.2px;font-weight:400;color:#f0f0f0;letter-spacing:0px;transform:scaleX(0.82);transform-origin:0 0;">0,1979</div>
<div class="t" style="left:280.20px;top:26.47px;font-size:12.2px;font-weight:400;color:#f0f0f0;letter-spacing:0px;transform:scaleX(0.82);transform-origin:0 0;">0,3258</div>
<div class="t" style="left:322.40px;top:26.47px;font-size:12.2px;font-weight:400;color:#f0f0f0;letter-spacing:0px;transform:scaleX(0.82);transform-origin:0 0;">0,4346</div>
<div class="t" style="left:370.50px;top:26.47px;font-size:12.2px;font-weight:400;color:#f0f0f0;letter-spacing:0px;transform:scaleX(0.82);transform-origin:0 0;">0,3083</div>
<div class="a" style="left:0;top:42.25px;width:379px;height:20.05px;background:#777777"></div>
<div class="a" style="left:0;top:42.25px;width:8px;height:20.05px;background:#2a2a2a"></div>
<div class="t" style="left:10.50px;top:46.52px;font-size:12.2px;font-weight:400;color:#f0f0f0;letter-spacing:0px;transform:scaleX(0.78);transform-origin:0 0;">y: CIE31</div>
<div class="t" style="left:54.30px;top:46.52px;font-size:12.2px;font-weight:400;color:#f0f0f0;letter-spacing:0px;transform:scaleX(0.82);transform-origin:0 0;">0,3198</div>
<div class="t" style="left:101.30px;top:46.52px;font-size:12.2px;font-weight:400;color:#f0f0f0;letter-spacing:0px;transform:scaleX(0.82);transform-origin:0 0;">0,3226</div>
<div class="t" style="left:143.60px;top:46.52px;font-size:12.2px;font-weight:400;color:#f0f0f0;letter-spacing:0px;transform:scaleX(0.82);transform-origin:0 0;">0,6810</div>
<div class="t" style="left:191.10px;top:46.52px;font-size:12.2px;font-weight:400;color:#f0f0f0;letter-spacing:0px;transform:scaleX(0.82);transform-origin:0 0;">0,0636</div>
<div class="t" style="left:232.60px;top:46.52px;font-size:12.2px;font-weight:400;color:#f0f0f0;letter-spacing:0px;transform:scaleX(0.82);transform-origin:0 0;">0,3281</div>
<div class="t" style="left:280.20px;top:46.52px;font-size:12.2px;font-weight:400;color:#f0f0f0;letter-spacing:0px;transform:scaleX(0.82);transform-origin:0 0;">0,1462</div>
<div class="t" style="left:322.40px;top:46.52px;font-size:12.2px;font-weight:400;color:#f0f0f0;letter-spacing:0px;transform:scaleX(0.82);transform-origin:0 0;">0,5361</div>
<div class="t" style="left:370.50px;top:46.52px;font-size:12.2px;font-weight:400;color:#f0f0f0;letter-spacing:0px;transform:scaleX(0.82);transform-origin:0 0;">0,3200</div>
<div class="a" style="left:0;top:62.30px;width:379px;height:20.05px;background:#3a3a3a"></div>
<div class="a" style="left:0;top:62.30px;width:8px;height:20.05px;background:#2a2a2a"></div>
<div class="t" style="left:10.50px;top:66.57px;font-size:12.2px;font-weight:400;color:#f0f0f0;letter-spacing:0px;transform:scaleX(0.78);transform-origin:0 0;">Y</div>
<div class="t" style="left:54.30px;top:66.57px;font-size:12.2px;font-weight:400;color:#f0f0f0;letter-spacing:0px;transform:scaleX(0.82);transform-origin:0 0;">210,1455</div>
<div class="t" style="left:101.30px;top:66.57px;font-size:12.2px;font-weight:400;color:#f0f0f0;letter-spacing:0px;transform:scaleX(0.82);transform-origin:0 0;">42,7814</div>
<div class="t" style="left:143.60px;top:66.57px;font-size:12.2px;font-weight:400;color:#f0f0f0;letter-spacing:0px;transform:scaleX(0.82);transform-origin:0 0;">142,5813</div>
<div class="t" style="left:191.10px;top:66.57px;font-size:12.2px;font-weight:400;color:#f0f0f0;letter-spacing:0px;transform:scaleX(0.82);transform-origin:0 0;">19,1828</div>
<div class="t" style="left:232.60px;top:66.57px;font-size:12.2px;font-weight:400;color:#f0f0f0;letter-spacing:0px;transform:scaleX(0.82);transform-origin:0 0;">160,9856</div>
<div class="t" style="left:280.20px;top:66.57px;font-size:12.2px;font-weight:400;color:#f0f0f0;letter-spacing:0px;transform:scaleX(0.82);transform-origin:0 0;">63,7460</div>
<div class="t" style="left:322.40px;top:66.57px;font-size:12.2px;font-weight:400;color:#f0f0f0;letter-spacing:0px;transform:scaleX(0.82);transform-origin:0 0;">190,5101</div>
<div class="t" style="left:370.50px;top:66.57px;font-size:12.2px;font-weight:400;color:#f0f0f0;letter-spacing:0px;transform:scaleX(0.82);transform-origin:0 0;">411,4200</div>
<div class="a" style="left:0;top:82.35px;width:379px;height:20.05px;background:#777777"></div>
<div class="a" style="left:0;top:82.35px;width:8px;height:20.05px;background:#2a2a2a"></div>
<div class="t" style="left:10.50px;top:86.62px;font-size:12.2px;font-weight:400;color:#f0f0f0;letter-spacing:0px;transform:scaleX(0.78);transform-origin:0 0;">Target Y</div>
<div class="t" style="left:54.30px;top:86.62px;font-size:12.2px;font-weight:400;color:#f0f0f0;letter-spacing:0px;transform:scaleX(0.82);transform-origin:0 0;">210,1455</div>
<div class="t" style="left:101.30px;top:86.62px;font-size:12.2px;font-weight:400;color:#f0f0f0;letter-spacing:0px;transform:scaleX(0.82);transform-origin:0 0;">48,1210</div>
<div class="t" style="left:143.60px;top:86.62px;font-size:12.2px;font-weight:400;color:#f0f0f0;letter-spacing:0px;transform:scaleX(0.82);transform-origin:0 0;">145,3641</div>
<div class="t" style="left:191.10px;top:86.62px;font-size:12.2px;font-weight:400;color:#f0f0f0;letter-spacing:0px;transform:scaleX(0.82);transform-origin:0 0;">16,6604</div>
<div class="t" style="left:232.60px;top:86.62px;font-size:12.2px;font-weight:400;color:#f0f0f0;letter-spacing:0px;transform:scaleX(0.82);transform-origin:0 0;">162,0245</div>
<div class="t" style="left:280.20px;top:86.62px;font-size:12.2px;font-weight:400;color:#f0f0f0;letter-spacing:0px;transform:scaleX(0.82);transform-origin:0 0;">64,7814</div>
<div class="t" style="left:322.40px;top:86.62px;font-size:12.2px;font-weight:400;color:#f0f0f0;letter-spacing:0px;transform:scaleX(0.82);transform-origin:0 0;">193,4851</div>
<div class="t" style="left:370.50px;top:86.62px;font-size:12.2px;font-weight:400;color:#f0f0f0;letter-spacing:0px;transform:scaleX(0.82);transform-origin:0 0;">411,4200</div>
<div class="a" style="left:0;top:102.40px;width:379px;height:20.05px;background:#3a3a3a"></div>
<div class="a" style="left:0;top:102.40px;width:8px;height:20.05px;background:#2a2a2a"></div>
<div class="t" style="left:10.50px;top:106.67px;font-size:12.2px;font-weight:400;color:#f0f0f0;letter-spacing:0px;transform:scaleX(0.78);transform-origin:0 0;">&Delta;E 2000</div>
<div class="t" style="left:54.30px;top:106.67px;font-size:12.2px;font-weight:400;color:#f0f0f0;letter-spacing:0px;transform:scaleX(0.82);transform-origin:0 0;">3,9045</div>
<div class="t" style="left:101.30px;top:106.67px;font-size:12.2px;font-weight:400;color:#f0f0f0;letter-spacing:0px;transform:scaleX(0.82);transform-origin:0 0;">2,2335</div>
<div class="t" style="left:143.60px;top:106.67px;font-size:12.2px;font-weight:400;color:#f0f0f0;letter-spacing:0px;transform:scaleX(0.82);transform-origin:0 0;">1,1314</div>
<div class="t" style="left:191.10px;top:106.67px;font-size:12.2px;font-weight:400;color:#f0f0f0;letter-spacing:0px;transform:scaleX(0.82);transform-origin:0 0;">1,9736</div>
<div class="t" style="left:232.60px;top:106.67px;font-size:12.2px;font-weight:400;color:#f0f0f0;letter-spacing:0px;transform:scaleX(0.82);transform-origin:0 0;">0,7165</div>
<div class="t" style="left:280.20px;top:106.67px;font-size:12.2px;font-weight:400;color:#f0f0f0;letter-spacing:0px;transform:scaleX(0.82);transform-origin:0 0;">1,0386</div>
<div class="t" style="left:322.40px;top:106.67px;font-size:12.2px;font-weight:400;color:#f0f0f0;letter-spacing:0px;transform:scaleX(0.82);transform-origin:0 0;">0,8321</div>
<div class="t" style="left:370.50px;top:106.67px;font-size:12.2px;font-weight:400;color:#f0f0f0;letter-spacing:0px;transform:scaleX(0.82);transform-origin:0 0;">4,8</div>
</div>
<div class="a" style="left:976px;top:389.5px;width:10.7px;height:90px;background:#474747;border:1px solid #555"></div>
<div class="a" style="left:976.8px;top:389.8px;width:9.6px;height:10.5px;background:linear-gradient(#8a8a8a,#6a6a6a)"></div>
<div class="a" style="left:976.8px;top:469px;width:9.6px;height:10.5px;background:linear-gradient(#8a8a8a,#6a6a6a)"></div>
<svg style="left:0;top:0" width="1" height="1"><path d="M978.6 397.3 L981.6 393.8 L984.6 397.3 Z" fill="#333"/><path d="M978.6 472.2 L981.6 475.8 L984.6 472.2 Z" fill="#333"/></svg>
<div class="a" style="left:977.6px;top:403.8px;width:7.6px;height:48.6px;border-radius:4px;background:#363636"></div>
<div class="a" style="left:605.5px;top:480px;width:371px;height:13px;background:#474747;border:1px solid #555"></div>
<div class="a" style="left:606px;top:480.8px;width:10.5px;height:11.5px;background:linear-gradient(#8a8a8a,#6a6a6a)"></div>
<div class="a" style="left:966px;top:480.5px;width:10px;height:12px;background:linear-gradient(#8a8a8a,#6a6a6a)"></div>
<svg style="left:0;top:0" width="1" height="1"><path d="M613 483.5 L609.5 486.5 L613 489.5 Z" fill="#333"/><path d="M969.5 483.5 L973 486.5 L969.5 489.5 Z" fill="#333"/></svg>
<div class="a" style="left:617px;top:481.6px;width:317px;height:9.8px;border-radius:5px;background:#363636"></div>
<div class="a" style="left:0;top:496px;width:1000px;height:34px;background:#232323"></div>
<div class="a" style="left:1.00px;top:497.3px;width:77.6px;height:32.2px;border-radius:2px;background:linear-gradient(#9a9a9a,#7c7c7c 60%,#6a6a6a);border:1px solid #555"></div>
<div class="a" style="left:3.80px;top:500.3px;width:72px;height:18.3px;border-radius:2px;background:#c4c4c4"></div>
<div class="t" style="left:-160.20px;width:400px;text-align:center;top:520.91px;font-size:7.2px;font-weight:400;color:#303030;letter-spacing:0.1px;">White</div>
<div class="a" style="left:80.20px;top:497.3px;width:77.6px;height:32.2px;border-radius:2px;background:linear-gradient(#9a9a9a,#7c7c7c 60%,#6a6a6a);border:1px solid #555"></div>
<div class="a" style="left:83.00px;top:500.3px;width:72px;height:18.3px;border-radius:2px;background:#c80000"></div>
<div class="t" style="left:-81.00px;width:400px;text-align:center;top:520.91px;font-size:7.2px;font-weight:400;color:#303030;letter-spacing:0.1px;">Red</div>
<div class="a" style="left:159.40px;top:497.3px;width:77.6px;height:32.2px;border-radius:2px;background:linear-gradient(#9a9a9a,#7c7c7c 60%,#6a6a6a);border:1px solid #555"></div>
<div class="a" style="left:162.20px;top:500.3px;width:72px;height:18.3px;border-radius:2px;background:#00c800"></div>
<div class="t" style="left:-1.80px;width:400px;text-align:center;top:520.91px;font-size:7.2px;font-weight:400;color:#303030;letter-spacing:0.1px;">Green</div>
<div class="a" style="left:238.60px;top:497.3px;width:77.6px;height:32.2px;border-radius:2px;background:linear-gradient(#9a9a9a,#7c7c7c 60%,#6a6a6a);border:1px solid #555"></div>
<div class="a" style="left:241.40px;top:500.3px;width:72px;height:18.3px;border-radius:2px;background:#0000c8"></div>
<div class="t" style="left:77.40px;width:400px;text-align:center;top:520.91px;font-size:7.2px;font-weight:400;color:#303030;letter-spacing:0.1px;">Blue</div>
<div class="a" style="left:317.80px;top:497.3px;width:77.6px;height:32.2px;border-radius:2px;background:linear-gradient(#9a9a9a,#7c7c7c 60%,#6a6a6a);border:1px solid #555"></div>
<div class="a" style="left:320.60px;top:500.3px;width:72px;height:18.3px;border-radius:2px;background:#00c8c8"></div>
<div class="t" style="left:156.60px;width:400px;text-align:center;top:520.91px;font-size:7.2px;font-weight:400;color:#303030;letter-spacing:0.1px;">Cyan</div>
<div class="a" style="left:397.00px;top:497.3px;width:77.6px;height:32.2px;border-radius:2px;background:linear-gradient(#9a9a9a,#7c7c7c 60%,#6a6a6a);border:1px solid #555"></div>
<div class="a" style="left:399.80px;top:500.3px;width:72px;height:18.3px;border-radius:2px;background:#c800c8"></div>
<div class="t" style="left:235.80px;width:400px;text-align:center;top:520.91px;font-size:7.2px;font-weight:400;color:#303030;letter-spacing:0.1px;">Magenta</div>
<div class="a" style="left:476.20px;top:497.3px;width:77.6px;height:32.2px;border-radius:2px;background:linear-gradient(#9a9a9a,#7c7c7c 60%,#6a6a6a);border:1px solid #555"></div>
<div class="a" style="left:479.00px;top:500.3px;width:72px;height:18.3px;border-radius:2px;background:#c8c800"></div>
<div class="t" style="left:315.00px;width:400px;text-align:center;top:520.91px;font-size:7.2px;font-weight:400;color:#303030;letter-spacing:0.1px;">Yellow</div>
<div class="a" style="left:555.6px;top:497.3px;width:77px;height:32.2px;border-radius:2px;background:#1c1c1c"></div>
<div class="a" style="left:557.4px;top:499.6px;width:73px;height:19.4px;border-radius:2px;background:#fff"></div>
<div class="t" style="left:394.10px;width:400px;text-align:center;top:521.24px;font-size:6.8px;font-weight:700;color:#f4f4f4;letter-spacing:0px;">100W</div>
<div class="a" style="left:637px;top:497px;width:194px;height:33px;background:linear-gradient(#3a3a3a,#2b2b2b)"></div>
<div class="a" style="left:831.8px;top:497.2px;width:24.5px;height:10px;border-radius:2px;background:linear-gradient(#adadad,#8a8a8a 55%,#7c7c7c);border:1px solid #3c3c3c"></div>
<div class="a" style="left:831.8px;top:507.5px;width:24.5px;height:22px;border-radius:2px;background:linear-gradient(#adadad,#8a8a8a 55%,#7c7c7c);border:1px solid #3c3c3c"></div>
<div class="a" style="left:857.2px;top:497.2px;width:23.8px;height:15px;border-radius:2px;background:linear-gradient(#adadad,#8a8a8a 55%,#7c7c7c);border:1px solid #3c3c3c"></div>
<div class="a" style="left:881.0px;top:497.2px;width:23.8px;height:15px;border-radius:2px;background:linear-gradient(#adadad,#8a8a8a 55%,#7c7c7c);border:1px solid #3c3c3c"></div>
<div class="a" style="left:904.8000000000001px;top:497.2px;width:23.8px;height:15px;border-radius:2px;background:linear-gradient(#adadad,#8a8a8a 55%,#7c7c7c);border:1px solid #3c3c3c"></div>
<div class="a" style="left:928.6px;top:497.2px;width:23.8px;height:15px;border-radius:2px;background:linear-gradient(#adadad,#8a8a8a 55%,#7c7c7c);border:1px solid #3c3c3c"></div>
<div class="a" style="left:952.4000000000001px;top:497.2px;width:23.8px;height:15px;border-radius:2px;background:linear-gradient(#adadad,#8a8a8a 55%,#7c7c7c);border:1px solid #3c3c3c"></div>
<div class="a" style="left:857.2px;top:513.4px;width:71px;height:16.4px;border-radius:2px;background:linear-gradient(#adadad,#8a8a8a 55%,#7c7c7c);border:1px solid #3c3c3c"></div>
<div class="a" style="left:928.2px;top:513.4px;width:71px;height:16.4px;border-radius:2px;background:linear-gradient(#adadad,#8a8a8a 55%,#7c7c7c);border:1px solid #3c3c3c"></div>
<div class="a" style="left:836px;top:510px;width:16px;height:16px;border:1.4px solid #1e1e1e;border-radius:2px;background:linear-gradient(#bdbdbd,#9a9a9a)"></div>
<div class="a" style="left:840.6px;top:514.6px;width:6.8px;height:6.8px;background:#000"></div>
<svg style="left:0;top:0" width="1" height="1"><circle cx="844" cy="501.8" r="3.6" fill="#8e8e8e"/><path d="M841.6 502.6 L844 500.2 L846.4 502.6 Z" fill="#222"/></svg>
<div class="a" style="left:863.60px;top:499.3px;width:11px;height:11px;border-radius:50%;background:radial-gradient(#8a8a8a,#9a9a9a)"></div>
<div class="a" style="left:887.40px;top:499.3px;width:11px;height:11px;border-radius:50%;background:radial-gradient(#8a8a8a,#9a9a9a)"></div>
<div class="a" style="left:911.20px;top:499.3px;width:11px;height:11px;border-radius:50%;background:radial-gradient(#8a8a8a,#9a9a9a)"></div>
<div class="a" style="left:935.00px;top:499.3px;width:11px;height:11px;border-radius:50%;background:radial-gradient(#8a8a8a,#9a9a9a)"></div>
<div class="a" style="left:958.80px;top:499.3px;width:11px;height:11px;border-radius:50%;background:radial-gradient(#8a8a8a,#9a9a9a)"></div>
<svg style="left:0;top:0" width="1" height="1"><rect x="866.8" y="502.5" width="4.4" height="4.4" fill="#222"/><path d="M891.3 502 L895.8 504.8 L891.3 507.6 Z" fill="#222"/><rect x="913.2" y="501.6" width="6.8" height="6.6" fill="none" stroke="#222" stroke-width="1.2"/><line x1="913.2" y1="504.9" x2="920" y2="504.9" stroke="#222" stroke-width="1"/><ellipse cx="938.8" cy="504.8" rx="2.1" ry="1.5" fill="none" stroke="#222" stroke-width="1"/><ellipse cx="942.4" cy="504.8" rx="2.1" ry="1.5" fill="none" stroke="#222" stroke-width="1"/><path d="M962.5 503.2 A3 3 0 0 1 968 503.5 M968.3 506.3 A3 3 0 0 1 962.6 506.2" fill="none" stroke="#222" stroke-width="1.1"/></svg>
<div class="a" style="left:867.5px;top:515.7px;width:11.5px;height:11.5px;border-radius:50%;background:radial-gradient(#8a8a8a,#9c9c9c)"></div>
<div class="a" style="left:978.5px;top:515.7px;width:11.5px;height:11.5px;border-radius:50%;background:radial-gradient(#8a8a8a,#9c9c9c)"></div>
<div class="t" style="left:869.30px;top:515.77px;font-size:11.5px;font-weight:700;color:#222;letter-spacing:0px;">&laquo;</div>
<div class="t" style="left:980.60px;top:515.77px;font-size:11.5px;font-weight:700;color:#222;letter-spacing:0px;">&raquo;</div>
<div class="t" style="left:887.50px;top:515.57px;font-size:11.5px;font-weight:400;color:#262626;letter-spacing:0.3px;">Back</div>
<div class="t" style="left:942.80px;top:515.57px;font-size:11.5px;font-weight:400;color:#262626;letter-spacing:0.3px;">Next</div>
<svg style="left:0;top:0" width="1" height="1"><g stroke="#ec1515" stroke-width="2.6" stroke-linecap="butt"><path d="M986.6 497.6 L986.6 510.8 M980.9 500.9 L992.3 507.5 M980.9 507.5 L992.3 500.9" fill="none"/></g></svg>
<script>
(function(){
var XY=[[0.1741,0.0050],[0.1738,0.0049],[0.1733,0.0048],[0.1726,0.0048],[0.1714,0.0051],[0.1703,0.0058],[0.1689,0.0069],[0.1669,0.0086],[0.1644,0.0109],[0.1611,0.0138],[0.1566,0.0177],[0.1510,0.0227],[0.1440,0.0297],[0.1355,0.0399],[0.1241,0.0578],[0.1096,0.0868],[0.0913,0.1327],[0.0687,0.2007],[0.0454,0.2950],[0.0235,0.4127],[0.0082,0.5384],[0.0039,0.6548],[0.0139,0.7502],[0.0389,0.8120],[0.0743,0.8338],[0.1142,0.8262],[0.1547,0.8059],[0.1929,0.7816],[0.2296,0.7543],[0.2658,0.7243],[0.3016,0.6923],[0.3373,0.6589],[0.3731,0.6245],[0.4087,0.5896],[0.4441,0.5547],[0.4788,0.5202],[0.5125,0.4866],[0.5448,0.4544],[0.5752,0.4242],[0.6029,0.3965],[0.6270,0.3725],[0.6482,0.3514],[0.6658,0.3340],[0.6801,0.3197],[0.6915,0.3083],[0.7006,0.2993],[0.7079,0.2920],[0.7140,0.2859],[0.7190,0.2809],[0.7260,0.2740],[0.7300,0.2700],[0.7347,0.2653]];
function xy2uv(x,y){var d=-2*x+12*y+3;return [4*x/d,9*y/d];}
function uv2xy(u,v){var d=6*u-16*v+12;return [9*u/d,4*v/d];}
// P3-D65 XYZ->RGB
var M=[[2.4934969,-0.9313836,-0.4027108],[-0.8294890,1.7626641,0.0236247],[0.0358458,-0.0761724,0.9568845]];
function uvRGB(u,v){var p=uv2xy(u,v);var x=p[0],y=p[1];var X=x/y,Y=1,Z=(1-x-y)/y;
 return [M[0][0]*X+M[0][1]*Y+M[0][2]*Z, M[1][0]*X+M[1][1]*Y+M[1][2]*Z, M[2][0]*X+M[2][1]*Y+M[2][2]*Z];}
var R=[0.4964,0.5255],G=[0.0986,0.5777],B=[0.1754,0.1579],W=[0.1978,0.4683];
var GAM=window.CIEGAM||1.2, DIM=window.CIEDIM||0.64;
function colIn(u,v){var c=uvRGB(u,v);var m=Math.max(c[0],c[1],c[2]);
 for(var i=0;i<3;i++){c[i]=Math.max(0,c[i])/m;c[i]=Math.pow(c[i],GAM);} return c;}
function inter(P){ // closest point on triangle boundary
 var ed=[[R,G],[G,B],[B,R]]; var best=1e9,E=null;
 var px=P[0]*637.6, py=P[1]*464.2;
 for(var k=0;k<3;k++){var A=ed[k][0],C=ed[k][1];
  var ax=A[0]*637.6, ay=A[1]*464.2, cx=C[0]*637.6, cy=C[1]*464.2;
  var ex=cx-ax, ey=cy-ay; var t=((px-ax)*ex+(py-ay)*ey)/(ex*ex+ey*ey); t=Math.max(0,Math.min(1,t));
  var qx=ax+ex*t, qy=ay+ey*t; var dd=(px-qx)*(px-qx)+(py-qy)*(py-qy);
  if(dd<best){best=dd;E=[qx/637.6,qy/464.2];}}
 return E;}
function sdist(P,A,C){ // signed distance (px) to edge; positive inside
 var ax=610.3+A[0]*637.6, ay=338-A[1]*464.2, cx=610.3+C[0]*637.6, cy=338-C[1]*464.2;
 var px=610.3+P[0]*637.6, py=338-P[1]*464.2;
 var ex=cx-ax, ey=cy-ay, L=Math.sqrt(ex*ex+ey*ey);
 return ((px-ax)*ey-(py-ay)*ex)/L;}
var cv=document.getElementById('cie'); if(!cv||!cv.getContext)return; var fbe=document.getElementById('ciefb'); if(fbe)fbe.parentNode.removeChild(fbe);
var W0=cv.width,H0=cv.height;
var off=document.createElement('canvas');off.width=W0;off.height=H0;
var oc=off.getContext('2d');var img=oc.createImageData(W0,H0);var d=img.data;
var sg = sdist(W,R,G)>0?1:-1;
for(var j=0;j<H0;j++){for(var i=0;i<W0;i++){
 var px=610+i+0.5, py=59+j+0.5; var u=(px-610.3)/637.6, v=(338-py)/464.2; var P=[u,v];
 var d1=sg*sdist(P,R,G), d2=sg*sdist(P,G,B), d3=sg*sdist(P,B,R);
 var dm=Math.min(d1,d2,d3); var cov=Math.max(0,Math.min(1,dm+0.5));
 var cin=[0,0,0],cout=[0,0,0];
 if(cov>0){var q=P; if(dm<0.5){var E=inter(P); if(E) q=[E[0]*0.999+W[0]*0.001,E[1]*0.999+W[1]*0.001];} cin=colIn(q[0],q[1]);}
 if(cov<1){var E2=inter(P); if(!E2)E2=P; var qq=[E2[0]*0.999+W[0]*0.001,E2[1]*0.999+W[1]*0.001]; var cc=colIn(qq[0],qq[1]); cout=[cc[0]*DIM,cc[1]*DIM,cc[2]*DIM];}
 var o=(j*W0+i)*4;
 for(var k=0;k<3;k++) d[o+k]=Math.round(255*(cin[k]*cov+cout[k]*(1-cov)));
 d[o+3]=255;
}}
oc.putImageData(img,0,0);
var ctx=cv.getContext('2d');
ctx.beginPath();
for(var n=0;n<XY.length;n++){var uv=xy2uv(XY[n][0],XY[n][1]);var X=610.3+uv[0]*637.6-610,Y=338-uv[1]*464.2-59; if(n==0)ctx.moveTo(X,Y);else ctx.lineTo(X,Y);}
ctx.closePath();
ctx.fillStyle=ctx.createPattern(off,'no-repeat');ctx.fill();

// xy chart
var c2=document.getElementById('xy'); var w2=c2.width,h2=c2.height; var x2=c2.getContext('2d');
var im2=x2.createImageData(w2,h2); var e=im2.data;
var SX=window.XYSX||0.00055, SY=window.XYSY||0.00095, CX=window.XYCX||104, CY=window.XYCY||60;
var MS=[[3.2404542,-1.5371385,-0.4985314],[-0.9692660,1.8760108,0.0415560],[0.0556434,-0.2040259,1.0572252]];
for(var j=0;j<h2;j++)for(var i=0;i<w2;i++){
 var x=0.3127+(i+0.5-CX)*SX, y=0.329-(j+0.5-CY)*SY; var X=x/y,Z=(1-x-y)/y;
 var r=MS[0][0]*X+MS[0][1]+MS[0][2]*Z, g=MS[1][0]*X+MS[1][1]+MS[1][2]*Z, b=MS[2][0]*X+MS[2][1]+MS[2][2]*Z;
 var m=Math.max(r,g,b); var cc=[r/m,g/m,b/m]; var o=(j*w2+i)*4;
 for(var k=0;k<3;k++){var t=Math.max(0,cc[k]); e[o+k]=Math.round(255*Math.pow(t,window.XYGAM||0.45));}
 e[o+3]=255;}
x2.putImageData(im2,0,0);
})();
</script>
</body></html>
